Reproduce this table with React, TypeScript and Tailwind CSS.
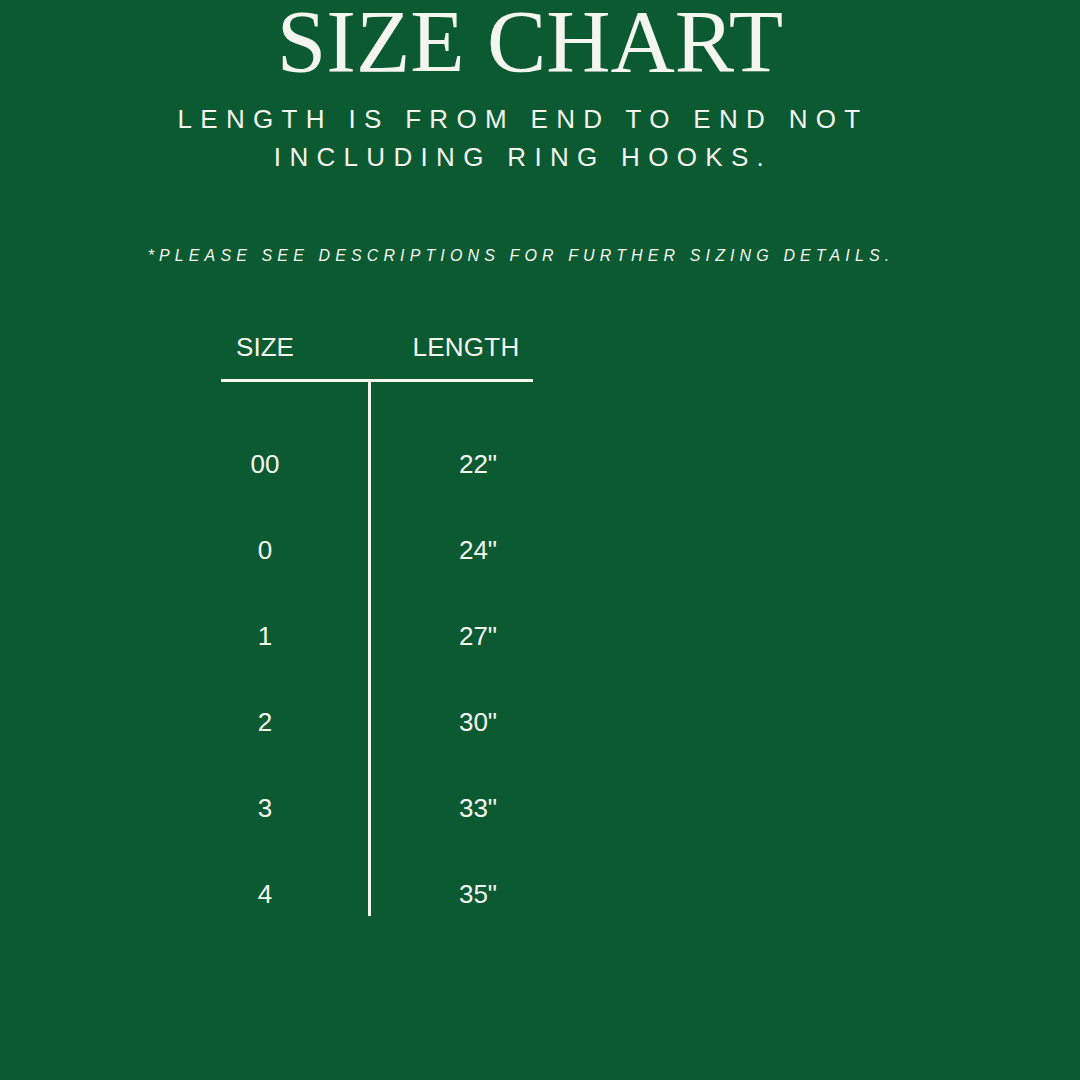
const rows = [
  { size: "00", length: "22\"" },
  { size: "0", length: "24\"" },
  { size: "1", length: "27\"" },
  { size: "2", length: "30\"" },
  { size: "3", length: "33\"" },
  { size: "4", length: "35\"" },
];

export default function App() {
  return (
    <div className="w-[1080px] h-[1080px] bg-[#0b5a32] text-[#f5f5ef] flex flex-col overflow-hidden">
      <div className="flex flex-col items-center">
        <h1 className="pr-[20px] font-['Liberation_Serif',serif] text-[89px] leading-[82px]">
          SIZE CHART
        </h1>
        <p className="mt-[18px] pr-[34px] text-center font-['Liberation_Sans',sans-serif] text-[26px] leading-[38px] tracking-[0.32em]">
          LENGTH IS FROM END TO END NOT
          <br />
          INCLUDING RING HOOKS.
        </p>
        <p className="mt-[70px] pr-[38px] font-['Liberation_Sans',sans-serif] italic text-[16px] leading-[20px] tracking-[0.32em]">
          *PLEASE SEE DESCRIPTIONS FOR FURTHER SIZING DETAILS.
        </p>
      </div>

      <div className="ml-[221px] mt-[65px] w-[312px] font-['Liberation_Sans',sans-serif]">
        <div className="flex text-[26px] leading-[32px]">
          <div className="w-[88px] text-center">SIZE</div>
          <div className="ml-[101px] w-[112px] text-center tracking-[0.01em]">LENGTH</div>
        </div>
        <div className="mt-[16px] h-[3px] bg-[#f5f5ef]" />
        <div className="grid grid-cols-[147px_1fr] text-[26px] leading-[44px]">
          <div className="flex flex-col gap-[42px] pt-[60px]">
            {rows.map((r) => (
              <div key={r.size} className="w-[88px] text-center">
                {r.size}
              </div>
            ))}
          </div>
          <div className="flex flex-col gap-[42px] pt-[60px] pl-[52px] border-l-[3px] border-[#f5f5ef]">
            {rows.map((r) => (
              <div key={r.size} className="w-[110px] text-center">
                {r.length}
              </div>
            ))}
          </div>
        </div>
      </div>
    </div>
  );
}
